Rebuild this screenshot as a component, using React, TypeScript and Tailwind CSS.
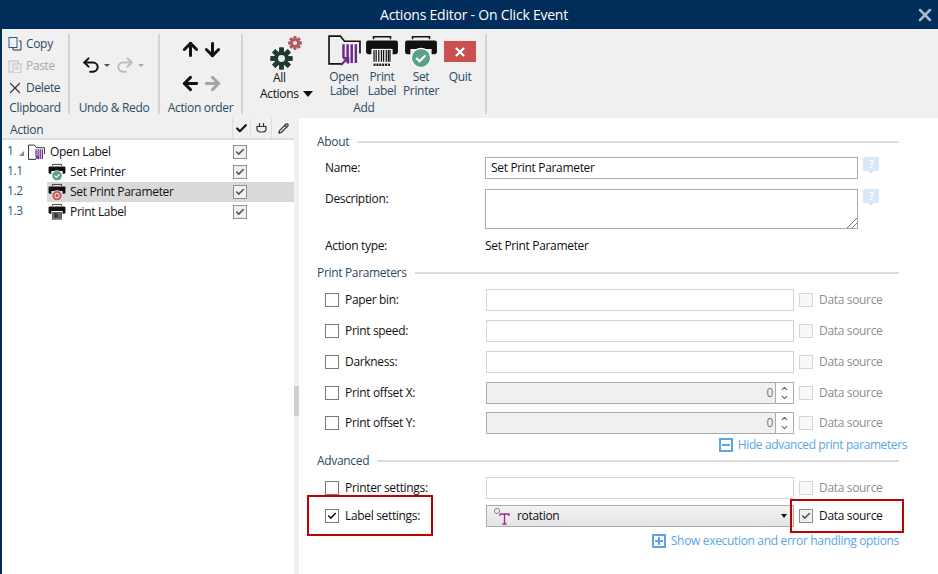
import React from "react";
import { X, Check, Undo2, Redo2, ArrowUp, ArrowDown, ArrowLeft, ArrowRight, ChevronUp, ChevronDown, Pencil } from "lucide-react";

const font = { fontFamily: '"Open Sans", "Noto Sans", sans-serif' };

function PrinterIcon({ s = 48, badge, barcode }: { s?: number; badge?: "check" | "gear" | "bar"; barcode?: boolean }) {
  return (
    <svg width={s} height={s} viewBox="0 0 32 32">
      <path d="M8 5V2.5h16V5" fill="none" stroke="#111" strokeWidth="1.4" />
      <path d="M3 6h26a2 2 0 0 1 2 2v9a2 2 0 0 1-2 2h-3v-5H6v5H3a2 2 0 0 1-2-2V8a2 2 0 0 1 2-2z" fill="#111" />
      {barcode && (
        <g>
          <rect x="7" y="14" width="18" height="17" fill="#fff" />
          <path d="M8.5 15v11M10.5 15v11M13 15v11M15.5 15v11M17.5 15v11M20 15v11M22 15v11M23.5 15v11" stroke="#111" strokeWidth="1.2" />
          <path d="M8 29h16" stroke="#222" strokeWidth="2.4" strokeDasharray="2 .7" />
        </g>
      )}
      {badge === "check" && (
        <g>
          <circle cx="16" cy="22.5" r="9" fill="#5ba08c" stroke="#fff" strokeWidth="1" />
          <path d="M11.5 22.5l3.2 3.2 5.6-5.6" fill="none" stroke="#fff" strokeWidth="2" />
        </g>
      )}
      {badge === "gear" && (
        <g>
          <circle cx="16" cy="22.5" r="9" fill="#c0595c" stroke="#fff" strokeWidth="1" />
          <circle cx="16" cy="22.5" r="4" fill="none" stroke="#fff" strokeWidth="1.6" />
        </g>
      )}
      {badge === "bar" && (
        <g>
          <rect x="7" y="16" width="18" height="14" fill="#666" />
          <path d="M13 18v8M16 18v8" stroke="#222" strokeWidth="2" />
          <path d="M8 28.5h16" stroke="#ddd" strokeWidth="1" strokeDasharray="2 1" />
        </g>
      )}
    </svg>
  );
}

function FolderIcon({ s = 34 }: { s?: number }) {
  return (
    <svg width={s} height={s} viewBox="0 0 32 32">
      <path d="M13 29H1V2h11l4 5h15v12" fill="none" stroke="#111" strokeWidth="1.6" />
      <path d="M15 10v13M19 10v18M23 10v18M27 10v18" stroke="#6b2a86" strokeWidth="2.4" />
      <path d="M12.5 30l6-6M14.5 23.5h5v5" fill="none" stroke="#6b2a86" strokeWidth="2.2" />
    </svg>
  );
}

function Gear({ size, color, teeth = 8 }: { size: number; color: string; teeth?: number }) {
  return (
    <svg width={size} height={size} viewBox="0 0 24 24">
      <g fill={color}>
        {Array.from({ length: teeth }).map((_, i) => (
          <rect key={i} x="9.6" y="0.5" width="4.8" height="23" rx="0.6" transform={`rotate(${(i * 360) / teeth} 12 12)`} />
        ))}
      </g>
      <circle cx="12" cy="12" r="7.6" fill={color} />
      <circle cx="12" cy="12" r="3.6" fill="#f0f0f0" />
    </svg>
  );
}

function RibbonGroup({ label, className, children }: { label: string; className: string; children: React.ReactNode }) {
  return (
    <div className={`flex flex-col h-[80px] border-r-2 border-[#d4d4d4] ${className}`}>
      <div className="flex-1 min-h-0">{children}</div>
      <div className="h-[15px] text-center text-[12px] leading-[17px] text-[#2b4a63] whitespace-nowrap">{label}</div>
    </div>
  );
}

function CheckBox({ checked, faded, dim }: { checked?: boolean; faded?: boolean; dim?: boolean }) {
  const cls = faded ? "border-[#d6d6d6] bg-[#f8f8f8]" : dim ? "border-[#8f8f8f] bg-[#f0f0f0]" : "border-[#7a7a7a] bg-white";
  return (
    <span className={`flex items-center justify-center w-[14px] h-[14px] shrink-0 border ${cls}`}>
      {checked && <Check size={10} strokeWidth={3.8} color={dim ? "#555" : "#111"} />}
    </span>
  );
}

function Heading({ title, className }: { title: string; className: string }) {
  return (
    <div className={`flex items-center gap-[8px] h-[16px] ${className}`}>
      <span className="text-[12px] leading-[16px] text-[#2b4a63]">{title}</span>
      <span className="flex-1 h-[2px] bg-[#dcdcdc]" />
    </div>
  );
}

function Help() {
  return (
    <span className="relative flex items-center justify-center w-[16px] h-[14px] bg-[#d9e7fa] rounded-[2px] text-white text-[10px] font-bold leading-none">
      ?
      <span className="absolute -bottom-[3px] left-[5px] w-0 h-0 border-l-[3px] border-r-[3px] border-t-[3px] border-l-transparent border-r-transparent border-t-[#d9e7fa]" />
    </span>
  );
}

function DataSource({ checked }: { checked?: boolean }) {
  return (
    <div className="flex items-center ml-[5px]">
      <CheckBox faded={!checked} checked={checked} dim={checked} />
      <span className={`ml-[6px] text-[12px] ${checked ? "text-[#111]" : "text-[#8d8d8d]"}`}>Data source</span>
    </div>
  );
}

function ParamRow({ label, mt, spinner }: { label: string; mt: string; spinner?: boolean }) {
  return (
    <div className={`flex items-center h-[22px] ${mt}`}>
      <span className="ml-[8px]"><CheckBox /></span>
      <span className="ml-[6px] w-[141px] text-[12px] text-[#111]">{label}</span>
      {spinner ? (
        <div className="flex w-[308px] h-[22px] border border-[#ababab] bg-[#f0f0f0]">
          <span className="flex-1 text-right pr-[2px] text-[12px] leading-[20px] text-[#777]">0</span>
          <span className="flex flex-col items-center justify-center w-[18px] border-l border-[#ababab] bg-white text-[#666]">
            <ChevronUp size={9} strokeWidth={3} />
            <ChevronDown size={9} strokeWidth={3} />
          </span>
        </div>
      ) : (
        <div className="w-[308px] h-[22px] border border-[#d4d4d4] bg-white" />
      )}
      <DataSource />
    </div>
  );
}

function Expander({ minus, text, className }: { minus?: boolean; text: string; className: string }) {
  return (
    <div className={`flex items-center justify-end text-[12px] text-[#5aa5e6] ${className}`}>
      <span className="relative flex items-center justify-center w-[14px] h-[14px] border-2 border-[#5aa5e6] mr-[5px]">
        <span className="absolute w-[8px] h-[2px] bg-[#5aa5e6]" />
        {!minus && <span className="absolute w-[2px] h-[8px] bg-[#5aa5e6]" />}
      </span>
      {text}
    </div>
  );
}

function TreeRow({ num, label, icon, active, first }: { num: string; label: string; icon: React.ReactNode; active?: boolean; first?: boolean }) {
  return (
    <div className="flex h-[20px] items-center">
      <span className={`${first ? "w-[17px]" : "w-[45px]"} shrink-0 pl-[5px] -mt-[3px] text-[12px] text-[#2a5c8a]`}>{num}</span>
      <div className={`flex items-center h-[20px] flex-1 ${active ? "bg-[#d9d9d9]" : ""}`}>
        {first && <span className="w-0 h-0 mr-[3px] mt-[2px]" style={{ borderBottom: "5px solid #8a8a8a", borderLeft: "5px solid transparent" }} />}
        <span className={`${first ? "w-[18px]" : "w-[20px]"} flex justify-center shrink-0`}>{icon}</span>
        <span className={`${first ? "ml-[5px]" : "ml-[3px]"} flex-1 text-[12px] text-[#111]`}>{label}</span>
        <span className="w-[61px] shrink-0 flex"><CheckBox checked dim /></span>
      </div>
    </div>
  );
}

export default function App() {
  return (
    <div style={font} className="w-[938px] h-[574px] overflow-hidden relative bg-white flex flex-col tracking-[-0.33px]">
      <div className="h-[29px] shrink-0 bg-[#002d5a] flex items-center justify-center relative text-white text-[14px] pl-[10px] tracking-[-0.23px]">
        Actions Editor - On Click Event
        <X size={20} strokeWidth={3} className="absolute right-[3px] top-[5px] text-[#a9b7c7]" />
      </div>
      <div className="flex-1 flex min-h-0">
        <div className="w-[2px] bg-[#002d5a]" />
        <div className="flex flex-col w-[292px]">
          <div className="h-[89px] w-[936px] bg-[#f0f0f0] flex items-start pt-[5px] shrink-0 relative z-10">
            <RibbonGroup label="Clipboard" className="w-[68px]">
              <div className="flex flex-col pl-[6px] -mt-[1px] text-[12px] text-[#2b4a63]">
                <div className="flex items-center h-[22px] gap-[4px]">
                  <svg width="14" height="14" viewBox="0 0 14 14" fill="none"><rect x="1" y="0.5" width="8" height="10" stroke="#2a5c8a" /><path d="M11 4h2v9H5v-2" stroke="#333" /></svg>
                  Copy
                </div>
                <div className="flex items-center h-[22px] gap-[4px] text-[#a9a9a9]">
                  <svg width="14" height="14" viewBox="0 0 14 14" fill="none" stroke="#bcbcbc"><rect x="1" y="2" width="9" height="11" /><rect x="5" y="5" width="8" height="9" fill="#f0f0f0" /><path d="M7 8h4M7 10h4" /></svg>
                  Paste
                </div>
                <div className="flex items-center h-[22px] gap-[2px] -ml-[2px]">
                  <X size={18} strokeWidth={1.6} className="text-[#333]" />
                  Delete
                </div>
              </div>
            </RibbonGroup>
            <RibbonGroup label="Undo & Redo" className="w-[90px]">
              <div className="flex items-center pl-[11px] pt-[21px]">
                <Undo2 size={20} strokeWidth={2.4} className="text-[#111]" />
                <span className="ml-[3px] mr-[5px] border-l-[3px] border-r-[3px] border-t-[3px] border-l-transparent border-r-transparent border-t-[#555]" />
                <Redo2 size={20} strokeWidth={2.4} className="text-[#bcbcbc]" />
                <span className="ml-[3px] border-l-[3px] border-r-[3px] border-t-[3px] border-l-transparent border-r-transparent border-t-[#aaa]" />
              </div>
            </RibbonGroup>
            <RibbonGroup label="Action order" className="w-[83px]">
              <div className="grid grid-cols-[22px_22px] w-[44px] ml-[20px] gap-y-[13px] pt-[5px]">
                <ArrowUp size={21} strokeWidth={3.4} className="text-[#111]" />
                <ArrowDown size={21} strokeWidth={3.4} className="text-[#111]" />
                <ArrowLeft size={21} strokeWidth={3.4} className="text-[#111]" />
                <ArrowRight size={21} strokeWidth={3.4} className="text-[#a3a3a3]" />
              </div>
            </RibbonGroup>
            <RibbonGroup label="Add" className="w-[244px]">
              <div className="flex">
                <div className="w-[77px] flex flex-col text-[12px] leading-[14px] text-[#2b4a63]">
                  <div className="relative w-[77px] h-[36px] mb-[1px]">
                    <span className="absolute left-[27px] top-[13px]"><Gear size={23} color="#1f3a30" /></span>
                    <span className="absolute left-[45px] top-[2px]"><Gear size={14} color="#b0595c" /></span>
                  </div>
                  <span className="text-[#111] pl-[30px]">All</span>
                  <span className="flex items-center text-[#111] mt-[2px] pl-[17px]">
                    Actions
                    <span className="ml-[4px] border-l-[5px] border-r-[5px] border-t-[6px] border-l-transparent border-r-transparent border-t-[#111]" />
                  </span>
                </div>
                <div className="flex flex-col items-center w-[38px] ml-[5px] text-[12px] leading-[14px] text-[#2b4a63] text-center">
                  <div className="h-[35px] mb-[1px]"><FolderIcon s={33} /></div>
                  Open<br />Label
                </div>
                <div className="flex flex-col items-center w-[38px] text-[12px] leading-[14px] text-[#2b4a63] text-center">
                  <div className="h-[35px] mb-[1px]"><PrinterIcon s={34} barcode /></div>
                  Print<br />Label
                </div>
                <div className="flex flex-col items-center w-[40px] text-[12px] leading-[14px] text-[#2b4a63] text-center">
                  <div className="h-[35px] mb-[1px]"><PrinterIcon s={34} badge="check" /></div>
                  Set<br />Printer
                </div>
                <div className="flex flex-col items-center w-[38px] text-[12px] leading-[14px] text-[#2b4a63] pt-[7px]">
                  <div className="w-[32px] h-[21px] bg-[#c9504f] flex items-center justify-center mb-[8px]">
                    <X size={14} strokeWidth={3.6} className="text-white" />
                  </div>
                  Quit
                </div>
              </div>
            </RibbonGroup>
          </div>
          <div className="flex h-[22px] bg-[#f0f0f0] border-b-2 border-[#dcdcdc] items-center">
            <span className="flex-1 pl-[8px] pt-[3px] text-[12px] text-[#2b4a63]">Action</span>
            <span className="w-[18px] h-full flex items-center justify-center border-l border-[#dcdcdc]"><Check size={13} strokeWidth={4} className="text-[#111]" /></span>
            <span className="w-[21px] h-full flex items-center justify-center border-l border-[#dcdcdc]">
              <svg width="11" height="11" viewBox="0 0 11 11" fill="none" stroke="#333" strokeWidth="1.2"><path d="M3.5 0v3M7.5 0v3M1 3.5h9V6a3 3 0 0 1-3 3H4a3 3 0 0 1-3-3z" /></svg>
            </span>
            <span className="w-[23px] h-full flex items-center justify-center border-l border-[#dcdcdc]"><Pencil size={11} strokeWidth={2.6} className="text-[#333]" /></span>
          </div>
          <div className="pt-[2px]">
            <TreeRow num="1" label="Open Label" first icon={<FolderIcon s={17} />} />
            <TreeRow num="1.1" label="Set Printer" icon={<PrinterIcon s={18} badge="check" />} />
            <TreeRow num="1.2" label="Set Print Parameter" active icon={<PrinterIcon s={18} badge="gear" />} />
            <TreeRow num="1.3" label="Print Label" icon={<PrinterIcon s={18} badge="bar" />} />
          </div>
        </div>
        <div className="w-[5px] mt-[89px] bg-[#f0f0f0] flex flex-col">
          <div className="h-[268px]" />
          <div className="h-[30px] bg-[#cfcfcf]" />
        </div>
        <div className="flex-1 mt-[89px] pl-[18px] pr-[39px] pt-[16px] relative">
          <Heading title="About" className="" />
          <div className="flex items-center mt-[7px] h-[22px]">
            <span className="ml-[8px] w-[160px] text-[12px] text-[#111]">Name:</span>
            <div className="w-[373px] h-[22px] border border-[#ababab] pl-[5px] text-[12px] leading-[20px] text-[#111]">Set Print Parameter</div>
            <span className="ml-[5px] -mt-[8px]"><Help /></span>
          </div>
          <div className="flex mt-[10px] h-[40px]">
            <span className="ml-[8px] w-[160px] text-[12px] text-[#111] mt-[1px]">Description:</span>
            <div className="relative w-[373px] h-[40px] border border-[#ababab]">
              <svg width="11" height="11" viewBox="0 0 11 11" className="absolute right-0 bottom-0" stroke="#777" fill="none"><path d="M1 11L11 1M6 11l5-5" /></svg>
            </div>
            <span className="ml-[5px]"><Help /></span>
          </div>
          <div className="flex items-center h-[16px] mt-[9px] text-[12px] text-[#111]">
            <span className="ml-[8px] w-[160px]">Action type:</span>
            Set Print Parameter
          </div>
          <Heading title="Print Parameters" className="mt-[11px]" />
          <ParamRow label="Paper bin:" mt="mt-[8px]" />
          <ParamRow label="Print speed:" mt="mt-[9px]" />
          <ParamRow label="Darkness:" mt="mt-[9px]" />
          <ParamRow label="Print offset X:" mt="mt-[9px]" spinner />
          <ParamRow label="Print offset Y:" mt="mt-[8px]" spinner />
          <Expander minus text="Hide advanced print parameters" className="mt-[1px] -mr-[8px] h-[20px] tracking-[-0.4px]" />
          <Heading title="Advanced" className="mt-[-2px]" />
          <ParamRow label="Printer settings:" mt="mt-[8px]" />
          <div className="flex items-center h-[22px] mt-[6px]">
            <span className="ml-[8px]"><CheckBox checked /></span>
            <span className="ml-[6px] w-[141px] text-[12px] text-[#111]">Label settings:</span>
            <div className="flex items-center w-[308px] h-[22px] border border-[#ababab] bg-[linear-gradient(#f3f3f3,#e4e4e4)]">
              <svg width="18" height="18" viewBox="0 0 18 18" className="ml-[6px]">
                <circle cx="4" cy="4" r="2.6" fill="none" stroke="#888" />
                <path d="M7 7h9v2M7 7v2M11.5 7v10M9.5 17h4" stroke="#a0209a" strokeWidth="1.3" fill="none" />
              </svg>
              <span className="ml-[6px] flex-1 text-[12px] text-[#111]">rotation</span>
              <span className="mr-[6px] border-l-[3.5px] border-r-[3.5px] border-t-[4px] border-l-transparent border-r-transparent border-t-[#111]" />
            </div>
            <DataSource checked />
          </div>
          <Expander text="Show execution and error handling options" className="mt-[4px] h-[20px]" />
          <div className="absolute left-[8px] top-[377px] w-[126px] h-[41px] border-2 border-[#c00000]" />
          <div className="absolute left-[491px] top-[381px] w-[114px] h-[34px] border-2 border-[#c00000]" />
        </div>
      </div>
    </div>
  );
}
